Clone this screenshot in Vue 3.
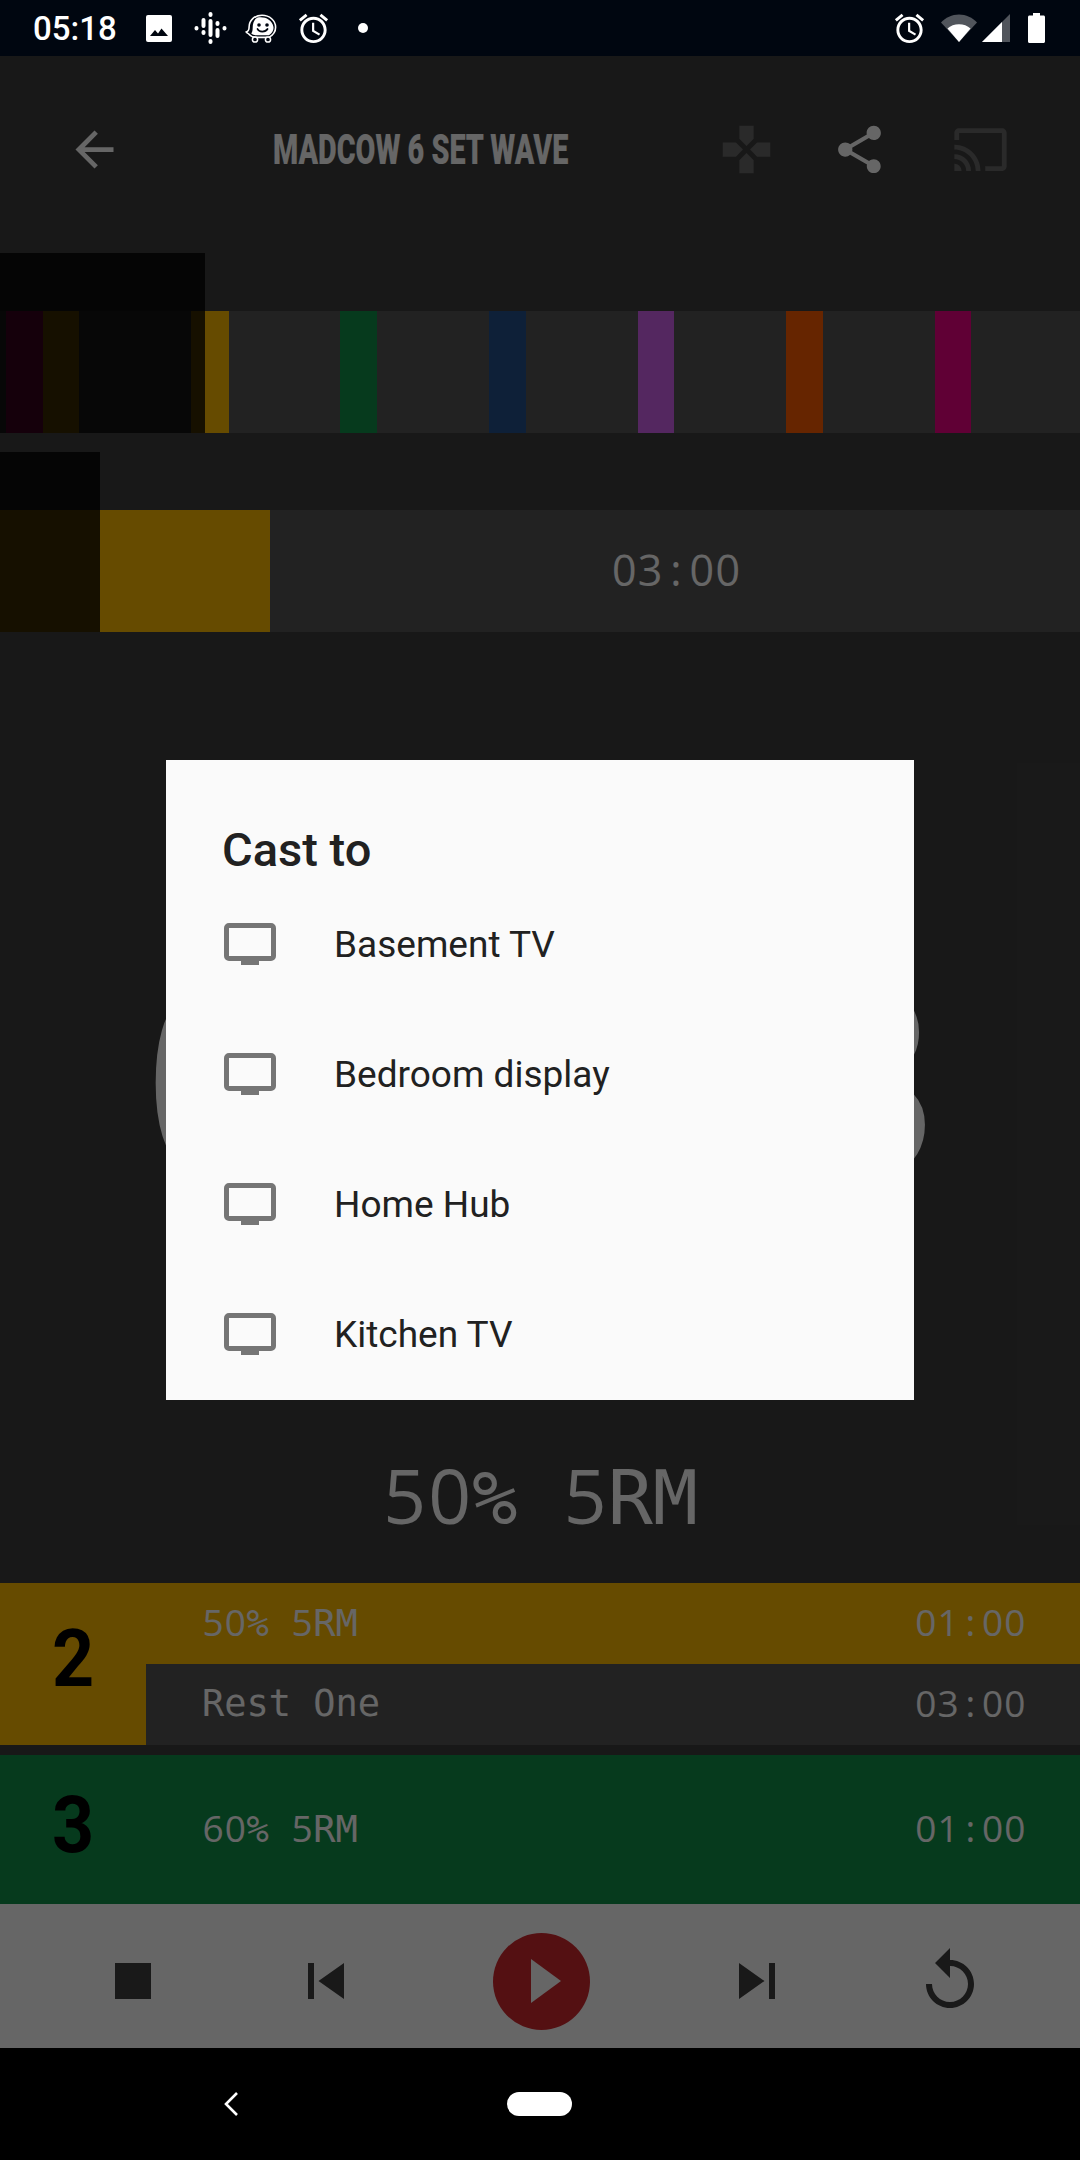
<script setup>
import { h } from 'vue'

const segments = [
  { w: 6, c: '#555555' },
  { w: 37, c: '#f00085' },
  { w: 36, c: '#ffbb00' },
  { w: 112, c: '#555555' },
  { w: 38, c: '#ffbb00' },
  { w: 111, c: '#555555' },
  { w: 37, c: '#119149' },
  { w: 112, c: '#555555' },
  { w: 37, c: '#23528c' },
  { w: 112, c: '#555555' },
  { w: 36, c: '#d261f0' },
  { w: 112, c: '#555555' },
  { w: 37, c: '#ff5d00' },
  { w: 112, c: '#555555' },
  { w: 36, c: '#f00085' },
  { w: 109, c: '#555555' }
]

const devices = ['Basement TV', 'Bedroom display', 'Home Hub', 'Kitchen TV']

// fixed width cells, digits come from Open Sans because the mono fonts here mark their zeros
const Mono = ({ text }) =>
  h(
    'span',
    { class: 'mono' },
    [...text].map((ch) => h('span', { class: /[0-9:]/.test(ch) ? 'cell digit' : 'cell' }, ch))
  )
Mono.props = ['text']
</script>

<template>
  <div class="phone">
    <!-- status bar -->
    <div class="status">
      <span class="clock-time">05:18</span>
      <svg class="st-image" viewBox="0 0 26 27">
        <rect width="26" height="27" rx="2" fill="#fff" />
        <path d="M4 21l5-6 3 3.500 3.500-5L22 21z" fill="#000610" />
      </svg>
      <svg class="st-pod" viewBox="0 0 33 32" fill="none" stroke="#fff" stroke-width="4" stroke-linecap="round">
        <path d="M16.500 2v1M16.500 9v14M16.500 29v1M9.500 8v6M9.500 20v1M23.500 11v1M23.500 18v6M2.500 16v.5M30.500 16v.5" />
      </svg>
      <svg class="st-waze" viewBox="0 0 32 29">
        <path d="M17 1.200c7.600 0 13.600 5.400 13.600 12 0 4.800-2.700 8-6.800 10.200H11.500c-2.600 0-5.400-.8-7.300-3C3 19.100 1.500 19 1.200 18.100c2.600-.8 2.900-2.500 2.900-5.100C4.100 6.500 9.500 1.200 17 1.200z" fill="#000610" stroke="#fff" stroke-width="1.600" />
        <path d="M12.500 3.500c6.500-1.400 14.700 1.700 15.900 9.300.6 3.600-1.300 6.300-4.500 8.400H11.500c-2 0-3.800-.4-5.200-1.700 1-1.400 1.400-3.400 1.400-6C7.700 9 9.500 5 12.500 3.500z" fill="#fff" />
        <circle cx="14" cy="11" r="1.800" fill="#000610" />
        <circle cx="22" cy="11" r="1.800" fill="#000610" />
        <path d="M12.500 15c1.500 3.400 8 3.400 10 0" fill="none" stroke="#000610" stroke-width="1.800" stroke-linecap="round" />
        <circle cx="10" cy="25.500" r="2.600" fill="#000610" stroke="#fff" stroke-width="1.500" />
        <circle cx="23" cy="25.500" r="2.600" fill="#000610" stroke="#fff" stroke-width="1.500" />
      </svg>
      <svg class="st-alarm" viewBox="0 0 24 24" fill="#fff">
        <path d="M22 5.720l-4.600-3.860-1.290 1.530 4.600 3.860L22 5.720zM7.880 3.390L6.600 1.860 2 5.710l1.290 1.530 4.590-3.850zM12.500 8H11v6l4.750 2.850.75-1.230-4-2.370V8zM12 4c-4.970 0-9 4.030-9 9s4.030 9 9 9 9-4.030 9-9-4.030-9-9-9zm0 16c-3.870 0-7-3.130-7-7s3.130-7 7-7 7 3.130 7 7-3.130 7-7 7z" />
      </svg>
      <span class="st-dot"></span>
      <svg class="st-alarm st-right" viewBox="0 0 24 24" fill="#fff">
        <path d="M22 5.720l-4.600-3.860-1.290 1.530 4.600 3.860L22 5.720zM7.880 3.390L6.600 1.860 2 5.710l1.290 1.530 4.590-3.850zM12.500 8H11v6l4.750 2.850.75-1.230-4-2.370V8zM12 4c-4.970 0-9 4.030-9 9s4.030 9 9 9 9-4.030 9-9-4.030-9-9-9zm0 16c-3.870 0-7-3.130-7-7s3.130-7 7-7 7 3.130 7 7-3.130 7-7 7z" />
      </svg>
      <svg class="st-wifi" viewBox="0 0 36 28">
        <path d="M0 8.500C4.500 3.500 11 .5 18 .5s13.500 3 18 8L18 28z" fill="#51555c" />
        <path d="M6.500 14.500c3-2.700 7-4.200 11.500-4.200s8.500 1.500 11.500 4.200L18 28z" fill="#fff" />
      </svg>
      <svg class="st-signal" viewBox="0 0 28 28">
        <path d="M0 28L28 0v28z" fill="#51555c" />
        <path d="M0 28l20-20v20z" fill="#fff" />
      </svg>
      <svg class="st-battery" viewBox="0 0 17 30">
        <path d="M5 0h7v2.500h3.500c.8 0 1.500.7 1.500 1.500v24.500c0 .8-.7 1.500-1.500 1.500h-14C.7 30 0 29.300 0 28.500V4c0-.8.7-1.500 1.500-1.500H5z" fill="#fff" />
      </svg>
    </div>

    <div class="main">
      <div class="appbar">
        <svg class="bar-icon back" viewBox="0 0 24 24" fill="#fff">
          <path d="M20 11H7.830l5.590-5.590L12 4l-8 8 8 8 1.410-1.410L7.830 13H20v-2z" />
        </svg>
        <div class="title">MADCOW 6 SET WAVE</div>
        <svg class="bar-icon gamepad" viewBox="0 0 24 24" fill="#6a6a6a">
          <path d="M15 7.500V2H9v5.500l3 3 3-3zM7.500 9H2v6h5.500l3-3-3-3zM9 16.500V22h6v-5.500l-3-3-3 3zM16.500 9l-3 3 3 3H22V9h-5.500z" />
        </svg>
        <svg class="bar-icon share" viewBox="0 0 24 24" fill="#fff">
          <path d="M18 16.080c-.76 0-1.440.3-1.960.77L8.910 12.700c.05-.23.09-.46.09-.7s-.04-.47-.09-.7l7.050-4.110c.54.5 1.250.81 2.040.81 1.660 0 3-1.340 3-3s-1.340-3-3-3-3 1.340-3 3c0 .24.04.47.09.7L8.040 9.810C7.500 9.310 6.790 9 6 9c-1.660 0-3 1.340-3 3s1.340 3 3 3c.79 0 1.500-.31 2.040-.81l7.120 4.160c-.05.21-.08.43-.08.65 0 1.610 1.310 2.920 2.920 2.920 1.610 0 2.920-1.310 2.920-2.920s-1.310-2.920-2.920-2.920z" />
        </svg>
        <svg class="bar-icon cast" viewBox="0 0 24 24" fill="#6a6a6a">
          <path d="M21 3H3c-1.100 0-2 .9-2 2v3h2V5h18v14h-7v2h7c1.100 0 2-.9 2-2V5c0-1.100-.9-2-2-2zM1 18v3h3c0-1.660-1.340-3-3-3zm0-4v2c2.760 0 5 2.240 5 5h2c0-3.870-3.130-7-7-7zm0-4v2c4.970 0 9 4.030 9 9h2c0-6.080-4.930-11-11-11z" />
        </svg>
      </div>

      <div class="timeline">
        <div class="shade shade-wide"></div>
        <div v-for="(s, i) in segments" :key="i" :style="{ width: s.w + 'px', background: s.c }"></div>
      </div>

      <div class="progress">
        <div class="shade shade-narrow"></div>
        <div class="progress-fill"></div>
        <div class="progress-time"><Mono text="03:00" /></div>
      </div>

      <div class="stage">
        <div class="big-clock"><Mono text="00:33" /></div>
        <div class="set-label"><Mono text="50% 5RM" /></div>
      </div>

      <div class="set-row current">
        <div class="set-num">2</div>
        <div class="set-lines">
          <div class="line"><Mono text="50% 5RM" /><Mono text="01:00" /></div>
          <div class="line rest"><Mono text="Rest One" /><Mono text="03:00" /></div>
        </div>
      </div>

      <div class="set-row next">
        <div class="set-num">3</div>
        <div class="set-lines">
          <div class="line"><Mono text="60% 5RM" /><Mono text="01:00" /></div>
        </div>
      </div>

      <div class="controls">
        <svg class="ctl" viewBox="0 0 24 24"><path d="M6 6h12v12H6z" /></svg>
        <svg class="ctl" viewBox="0 0 24 24"><path d="M6 6h2v12H6zm3.500 6l8.500 6V6z" /></svg>
        <div class="play">
          <svg viewBox="0 0 30 44"><path d="M0 0l30 22L0 44z" fill="#fff" /></svg>
        </div>
        <svg class="ctl" viewBox="0 0 24 24"><path d="M6 18l8.500-6L6 6v12zM16 6v12h2V6h-2z" /></svg>
        <svg class="ctl" viewBox="0 0 24 24"><path d="M12 5V1L7 6l5 5V7c3.310 0 6 2.690 6 6s-2.690 6-6 6-6-2.690-6-6H4c0 4.420 3.580 8 8 8s8-3.580 8-8-3.580-8-8-8z" /></svg>
      </div>

      <div class="scrim"></div>
    </div>

    <div class="navbar">
      <svg class="nav-back" viewBox="0 0 14 24" fill="none" stroke="#fff" stroke-width="2.600">
        <path d="M13 1L2 12l11 11" />
      </svg>
      <div class="nav-home"></div>
    </div>

    <!-- cast dialog -->
    <div class="dialog-wrap">
      <div class="dialog">
        <div class="dialog-title">Cast to</div>
        <div v-for="d in devices" :key="d" class="device">
          <svg class="tv" viewBox="0 0 52 42">
            <rect x="2.500" y="2.500" width="47" height="33" rx="2.500" fill="none" stroke="#757575" stroke-width="5" />
            <rect x="17" y="38" width="18" height="4" fill="#757575" />
          </svg>
          <span>{{ d }}</span>
        </div>
      </div>
    </div>
  </div>
</template>

<style>
body {
  background: #000;
}
.mono {
  display: block;
  font-family: "DejaVu Sans Mono", monospace;
  white-space: pre;
  line-height: 1;
}
/* keeps the baseline the same in spans that hold only digits */
.mono::before {
  content: "\200b";
}
.cell {
  display: inline-block;
  width: 0.602em;
  text-align: center;
  line-height: 1;
}
.digit {
  font-family: "Open Sans", sans-serif;
}
</style>

<style scoped>
.phone {
  position: relative;
  width: 1080px;
  height: 2160px;
  display: flex;
  flex-direction: column;
  overflow: hidden;
  font-family: Roboto, sans-serif;
}

/* status bar */
.status {
  height: 56px;
  flex: none;
  background: #000610;
  display: flex;
  align-items: center;
  padding-left: 33px;
  color: #fff;
}
.clock-time {
  font-size: 33px;
  font-weight: 500;
  width: 113px;
}
.st-image {
  width: 26px;
  height: 27px;
  margin-right: 22px;
}
.st-pod {
  width: 33px;
  height: 32px;
  margin-right: 18px;
}
.st-waze {
  width: 32px;
  height: 29px;
  margin-right: 19px;
}
.st-alarm {
  width: 35px;
  height: 35px;
  margin-right: 27px;
}
.st-dot {
  width: 10px;
  height: 10px;
  border-radius: 50%;
  background: #fff;
}
.st-right {
  margin-left: auto;
  margin-right: 14px;
}
.st-wifi {
  width: 36px;
  height: 28px;
  margin-right: 5px;
}
.st-signal {
  width: 28px;
  height: 28px;
  margin-right: 18px;
}
.st-battery {
  width: 17px;
  height: 30px;
  margin-right: 35px;
}

.main {
  position: relative;
  height: 1992px;
  flex: none;
  background: #3e3e3e;
  display: flex;
  flex-direction: column;
}

/* app bar */
.appbar {
  height: 186px;
  flex: none;
  display: flex;
  align-items: center;
  padding-left: 66px;
}
.bar-icon {
  width: 57px;
  height: 57px;
  flex: none;
}
.title {
  margin-left: 150px;
  width: 295px;
  font-family: Roboto, sans-serif;
  font-weight: 900;
  font-size: 42px;
  color: #fff;
  white-space: nowrap;
  transform: scaleX(0.685);
  transform-origin: left center;
}
.gamepad {
  margin-left: auto;
}
.share {
  margin-left: 56px;
}
.cast {
  margin-left: 64px;
  margin-right: 71px;
}

/* workout timeline */
.timeline {
  position: relative;
  margin-top: 69px;
  height: 122px;
  flex: none;
  display: flex;
}
.shade {
  position: absolute;
  left: 0;
  top: -58px;
  bottom: 0;
  background: rgba(0, 0, 0, 0.78);
}
.shade-wide {
  width: 205px;
}
.shade-narrow {
  width: 100px;
}

.progress {
  position: relative;
  margin-top: 77px;
  height: 122px;
  flex: none;
  display: flex;
  align-items: center;
  background: #555;
}
.progress-fill {
  width: 270px;
  height: 100%;
  background: #ffbb00;
}
.progress-time {
  flex: 1;
  display: flex;
  justify-content: center;
  font-size: 43px;
  color: #fff;
  padding: 0 0 2px 2px;
}

.stage {
  flex: 1;
  display: flex;
  flex-direction: column;
  align-items: center;
  color: #fff;
}
.big-clock {
  margin-top: 310px;
  margin-left: 3px;
  font-size: 268px;
  white-space: nowrap;
}
.set-label {
  margin-top: 238px;
  font-size: 75px;
}

/* set rows */
.set-row {
  display: flex;
  flex: none;
}
.current {
  background: #ffbb00;
  height: 162px;
}
.next {
  background: #119149;
  height: 149px;
  margin-top: 10px;
}
.set-num {
  width: 146px;
  flex: none;
  text-align: center;
  font-family: Roboto, sans-serif;
  font-weight: 700;
  font-size: 80px;
  color: #000;
  align-self: center;
  padding-bottom: 10px;
  transform: scaleX(0.92);
}
.set-lines {
  flex: 1;
  display: flex;
  flex-direction: column;
}
.line {
  flex: 1;
  display: flex;
  justify-content: space-between;
  align-items: center;
  padding: 0 54px 2px 56px;
  font-size: 37px;
  color: #fff;
}
.rest {
  background: #555;
}

/* transport controls */
.controls {
  height: 144px;
  box-sizing: border-box;
  padding-top: 10px;
  flex: none;
  background: #fff;
  display: flex;
  align-items: center;
  gap: 121px;
  padding-left: 97px;
}
.ctl {
  width: 72px;
  height: 72px;
  flex: none;
  fill: #404040;
}
.play {
  width: 97px;
  height: 97px;
  flex: none;
  margin: 0 10px;
  border-radius: 50%;
  background: #d2282f;
  display: flex;
  align-items: center;
  padding-left: 38px;
  box-sizing: border-box;
}
.play svg {
  width: 30px;
  height: 44px;
}

.scrim {
  position: absolute;
  inset: 0;
  background: rgba(0, 0, 0, 0.6);
}

/* nav bar */
.navbar {
  flex: 1;
  background: #000;
  position: relative;
  display: flex;
  align-items: center;
  padding-left: 224px;
}
.nav-back {
  width: 14px;
  height: 24px;
}
.nav-home {
  width: 65px;
  height: 24px;
  border-radius: 12px;
  background: #fff;
  margin-left: 269px;
}

/* dialog */
.dialog-wrap {
  position: absolute;
  inset: 0;
  display: flex;
  align-items: center;
  justify-content: center;
}
.dialog {
  width: 748px;
  height: 640px;
  background: #fafafa;
  color: #212121;
  box-sizing: border-box;
}
.dialog-title {
  height: 119px;
  box-sizing: border-box;
  padding: 62px 0 0 56px;
  font-size: 47px;
  line-height: 56px;
  font-weight: 500;
}
.device {
  height: 130px;
  display: flex;
  align-items: center;
  padding-left: 58px;
  font-size: 37px;
}
.tv {
  width: 52px;
  height: 42px;
  margin-right: 58px;
  flex: none;
}
</style>
